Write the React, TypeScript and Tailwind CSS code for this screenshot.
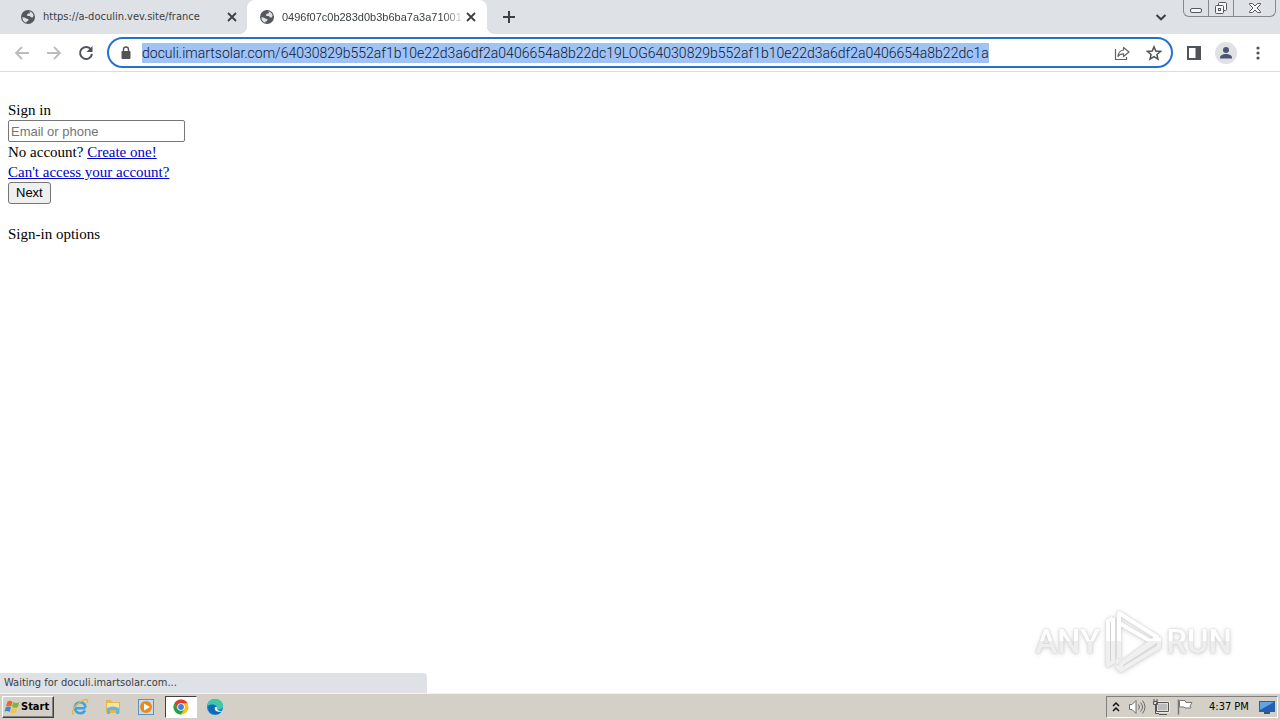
import { useEffect, useRef } from "react";
import type { ReactNode } from "react";

const PAGE_URL =
  "doculi.imartsolar.com/64030829b552af1b10e22d3a6df2a0406654a8b22dc19LOG64030829b552af1b10e22d3a6df2a0406654a8b22dc1a";

function Globe() {
  return (
    <svg className="size-4 shrink-0" viewBox="0 0 16 16" aria-hidden="true">
      <circle cx="8" cy="8" r="7" fill="#54575b" />
      <path d="M2.400 8.200 4.600 8.600 6.800 9.800 8.600 10.200 8 12 6.600 12.400 6.200 13.800C3.800 13.200 2.200 10.800 2.400 8.200zM9 2.300l2.200.700 1.600 1.600.8 1.800-.8 2.200-2-.4-1-1.200H7.600l-.8-1.200 1.400-1.200 1.400-.2.400-1z" fill="#dfe1e5" />
    </svg>
  );
}

function Cross() {
  return (
    <svg className="size-3" viewBox="0 0 12 12" stroke="#3c4043" strokeWidth="1.800" aria-hidden="true">
      <path d="m2 2 8 8M10 2l-8 8" />
    </svg>
  );
}

function Tab({ title, active }: { title: string; active?: boolean }) {
  return (
    <div className={active ? "relative flex h-full w-60 items-center rounded-t-lg bg-white pr-2.5 pl-3" : "flex h-full w-[239px] items-center pr-[9px] pl-3"}>
      {active && (
        <>
          <span className="absolute bottom-0 -left-2 size-2 bg-[radial-gradient(circle_at_0_0,#dee1e6_8px,#fff_8px)]" />
          <span className="absolute -right-2 bottom-0 size-2 bg-[radial-gradient(circle_at_100%_0,#dee1e6_8px,#fff_8px)]" />
        </>
      )}
      <Globe />
      <a href="#tab" className={active ? "ml-[7px] min-w-0 flex-1 overflow-hidden font-['Liberation_Sans',sans-serif] whitespace-nowrap [mask-image:linear-gradient(to_right,#000_88%,transparent)]" : "ml-[7px] min-w-0 flex-1 overflow-hidden whitespace-nowrap"}>
        {title}
      </a>
      <button aria-label="Close tab"><Cross /></button>
    </div>
  );
}

function IconButton({ label, className, children }: { label: string; className?: string; children: ReactNode }) {
  return (
    <button aria-label={label} className={"flex h-6 shrink-0 items-center justify-center " + (className ?? "w-8")}>
      {children}
    </button>
  );
}

function TabStrip() {
  return (
    <header className="flex h-[34px] bg-[#dee1e6] pl-2 text-[11px] text-[#3c4043]">
      <Tab title="https://a-doculin.vev.site/france" />
      <Tab title="0496f07c0b283d0b3b6ba7a3a71001" active />
      <IconButton label="New tab" className="ml-2 h-[34px] w-7">
        <svg className="size-4" viewBox="0 0 16 16" stroke="#3c4043" strokeWidth="2"><path d="M2 8h12M8 2v12" /></svg>
      </IconButton>
      <IconButton label="Search tabs" className="mr-2 ml-auto h-[34px] w-7">
        <svg className="size-3" viewBox="0 0 12 12" fill="none" stroke="#3c4043" strokeWidth="2"><path d="m1.500 4 4.500 4.300L10.500 4" /></svg>
      </IconButton>
      <div className="mr-1 flex h-[17px] w-[93px] divide-x divide-[#85888e] rounded-b-md border border-t-0 border-[#85888e]">
        <button aria-label="Minimize" className="flex w-[25px] items-center justify-center">
          <svg className="h-3 w-4" viewBox="0 0 16 12"><rect x="2.500" y="6.500" width="11" height="4" rx="1.500" fill="#f5f6f8" stroke="#54575d" /></svg>
        </button>
        <button aria-label="Restore" className="flex w-[25px] items-center justify-center">
          <svg className="size-3.5" viewBox="0 0 14 14" fill="#f5f6f8" stroke="#54575d"><rect x="4.500" y="1.500" width="8" height="8" rx="1" /><rect x="1.500" y="4.500" width="8" height="8" rx="1" /><rect x="4.500" y="7.500" width="2" height="2" /></svg>
        </button>
        <button aria-label="Close" className="flex flex-1 items-center justify-center">
          <svg className="h-3 w-3.5" viewBox="0 0 14 12"><path d="M1.500 1.500h3L7 4l2.500-2.500h3v1L9 6l3.500 3.500v1h-3L7 8l-2.500 2.500h-3v-1L5 6 1.500 2.500z" fill="#f5f6f8" stroke="#54575d" /></svg>
        </button>
      </div>
    </header>
  );
}

function Toolbar() {
  const address = useRef<HTMLInputElement>(null);
  useEffect(() => {
    address.current?.focus();
    address.current?.select();
  }, []);
  return (
    <nav className="flex h-[38px] items-center border-b border-[#dadce0] bg-white px-1.5">
      <IconButton label="Back">
        <svg className="size-4" viewBox="0 0 16 16" fill="none" stroke="#babcbe" strokeWidth="1.800"><path d="M15 8H2M8 2 2 8l6 6" /></svg>
      </IconButton>
      <IconButton label="Forward">
        <svg className="size-4" viewBox="0 0 16 16" fill="none" stroke="#babcbe" strokeWidth="1.800"><path d="M1 8h13M8 2l6 6-6 6" /></svg>
      </IconButton>
      <IconButton label="Reload">
        <svg className="size-4" viewBox="0 0 16 16" fill="none" stroke="#505357" strokeWidth="2"><path d="M13 4.500A6 6 0 1 0 14 9" /><path d="M14.500 1v6h-6z" fill="#505357" stroke="none" /></svg>
      </IconButton>
      <div className="ml-[5px] flex h-[31px] min-w-0 flex-1 items-center rounded-full border-2 border-[#2870cf] pr-px pl-2.5">
        <svg className="mr-[9px] h-4 w-3.5 shrink-0" viewBox="0 0 14 16" aria-hidden="true"><rect x="2.500" y="6" width="9" height="8" rx="1" fill="#505357" /><path d="M4.500 7V4.500a2.500 2.500 0 0 1 5 0V7" fill="none" stroke="#505357" strokeWidth="1.400" /></svg>
        <input ref={address} aria-label="Address" defaultValue={PAGE_URL} className="h-5 min-w-0 flex-1 font-[Roboto,sans-serif] text-sm leading-5 font-light text-[#0b1a33] caret-transparent outline-none selection:bg-[#a0c2f5] selection:text-[#0b1a33]" />
        <IconButton label="Share">
          <svg className="size-4" viewBox="0 0 16 16" fill="none" stroke="#606367" strokeWidth="1.200"><path d="M1.500 4v10.500h11V12" /><path d="M9.500 2.500 15 7l-5.500 4.500V8.800C7 8.800 5.300 9.500 4 11.500 4.300 8 6.500 5.400 9.500 5z" strokeLinejoin="round" /></svg>
        </IconButton>
        <IconButton label="Bookmark">
          <svg className="size-4" viewBox="0 0 16 16" fill="none" stroke="#505357" strokeWidth="1.500"><path d="m8 1.800 1.800 4.300 4.700.4-3.600 3 1.100 4.600L8 11.700 4 14.100l1.100-4.600-3.600-3 4.700-.4z" /></svg>
        </IconButton>
      </div>
      <IconButton label="Side panel" className="ml-[5px] w-8">
        <svg className="size-4" viewBox="0 0 16 16"><path fill="#505357" fillRule="evenodd" d="M1 1h14v14H1zM3 3v10h6.500V3z" /></svg>
      </IconButton>
      <IconButton label="Profile">
        <svg className="size-6" viewBox="0 0 24 24"><circle cx="12" cy="12" r="11" fill="#dfe1e5" /><circle cx="12" cy="9" r="3" fill="#4b5670" /><path d="M6 17c0-3 3-4 6-4s6 1 6 4v.500H6z" fill="#4b5670" /></svg>
      </IconButton>
      <IconButton label="Menu">
        <svg className="size-4" viewBox="0 0 16 16" fill="#505357"><circle cx="8" cy="3" r="1.600" /><circle cx="8" cy="8" r="1.600" /><circle cx="8" cy="13" r="1.600" /></svg>
      </IconButton>
    </nav>
  );
}

function Watermark() {
  return (
    <div className="absolute right-12 bottom-5 flex h-16 items-center gap-1 font-[Roboto,sans-serif] text-[33px] leading-none font-medium text-white [filter:drop-shadow(0_0_1px_#ccc)_drop-shadow(0_1px_2px_#ddd)]">
      <span className="bg-linear-to-b from-white from-50% to-[#eee] to-50% bg-clip-text text-transparent">ANY</span>
      <svg className="h-16 w-[58px]" viewBox="0 0 58 64" fill="none" strokeWidth="4" strokeLinejoin="round" aria-hidden="true">
        <defs>
          <linearGradient id="sheen" gradientUnits="userSpaceOnUse" x1="0" y1="0" x2="0" y2="64">
            <stop offset="0.500" stopColor="#fff" />
            <stop offset="0.500" stopColor="#f0f0f0" />
          </linearGradient>
        </defs>
        <path stroke="url(#sheen)" d="M15 49V4l38 24-35 26M15 14l33 19M9 9 4 12v44l5-3V9M12 57l5 4 38-23V30L17 55v6" />
      </svg>
      <span className="bg-linear-to-b from-white from-50% to-[#eee] to-50% bg-clip-text text-transparent">RUN</span>
    </div>
  );
}

function Page() {
  return (
    <main className="relative flex-1 bg-white px-2 pt-7 font-['Liberation_Serif',serif] text-[15px] leading-5 text-black">
      <form onSubmit={(event) => event.preventDefault()}>
        <label htmlFor="account" className="block">Sign in</label>
        <input id="account" placeholder="Email or phone" className="block h-[22px] w-[177px] rounded-xs border border-[#767676] px-0.5 font-['Liberation_Sans',sans-serif] text-[13px] placeholder:text-[#757575]" />
        <p>No account? <a href="#create" className="text-[#0000c8] underline">Create one!</a></p>
        <p><a href="#recover" className="text-[#0000c8] underline">Can't access your account?</a></p>
        <button type="submit" className="block h-[22px] rounded-[3px] border border-[#767676] bg-[#efefef] px-[7px] font-['Liberation_Sans',sans-serif] text-[13px] leading-5">Next</button>
      </form>
      <p className="mt-5">Sign-in options</p>
      <Watermark />
      <div role="status" className="absolute bottom-0 left-0 h-5 w-1/3 rounded-tr bg-[#dee1e6] pl-1 font-['DejaVu_Sans_Condensed','DejaVu_Sans',sans-serif] text-[11px] leading-5 text-[#3c4043]">
        Waiting for doculi.imartsolar.com...
      </div>
    </main>
  );
}

function Taskbar() {
  return (
    <footer className="flex h-[27px] items-center border-t border-[#f4f2ed] bg-[#d4d0c8] pr-0.5 pl-0.5 font-['DejaVu_Sans_Condensed','DejaVu_Sans',sans-serif] text-[11px] text-black">
      <button className="flex h-[22px] w-[52px] items-center gap-px border border-t-white border-r-[#404040] border-b-[#404040] border-l-white pl-px font-bold shadow-[inset_-1px_-1px_#808080]">
        <svg className="size-4 shrink-0" viewBox="0 0 16 16" aria-hidden="true"><path fill="#e8652b" d="M3.500 2.500q2.500-1.500 5 .2L7.200 7.500Q5 6 2 7.300z" /><path fill="#7fb53b" d="M9.300 3q2.500 1.800 6 .2l-1.500 4.700q-3 1.800-5.800-.1z" /><path fill="#4386cf" d="M1.800 8.200q3-1.500 5.200.2l-1.400 4.600q-2.100-1.600-5-.4z" /><path fill="#f2c83a" d="M7.800 8.800q2.700 1.800 5.600.1L12 13.500q-2.800 1.700-5.500-.1z" /></svg>
        Start
      </button>
      <IconButton label="Internet Explorer" className="ml-[9px] w-[33px]">
        <svg className="size-[18px]" viewBox="0 0 18 18" fill="none"><path d="M14.500 10.300H4.500M14 12.500A5.500 5.500 0 1 1 14.700 9.500" stroke="#39a6df" strokeWidth="2.600" /><path d="M3 16C-1 16 3 8 9 4s9-3 7 1" stroke="#e5b83b" strokeWidth="1.500" /></svg>
      </IconButton>
      <IconButton label="File Explorer" className="w-[33px]">
        <svg className="size-[18px]" viewBox="0 0 18 18"><path fill="#dfb951" d="M2 2h5l1 2h8v11H2z" /><path fill="#f8e49a" d="M3 5h12v6H3z" /><path fill="#6bb5dd" d="M3 10q6-3 12 0v6h-3v-4H6v4H3z" /></svg>
      </IconButton>
      <IconButton label="Media Player" className="w-[33px]">
        <svg className="size-[18px]" viewBox="0 0 18 18"><rect x="1.500" y="1.500" width="15" height="15" fill="#c5ddf1" stroke="#5994c1" /><circle cx="9" cy="9" r="6" fill="#ef8715" /><path d="m7 5.500 6 3.500-6 3.500z" fill="#fff" /></svg>
      </IconButton>
      <button aria-label="Chrome" className="ml-[3px] flex h-[22px] w-8 items-center justify-center border border-t-[#404040] border-r-white border-b-white border-l-[#404040] bg-white">
        <svg className="size-4" viewBox="0 0 16 16"><circle cx="8" cy="8" r="7.500" fill="#fbc116" /><path d="M1.500 4.250a7.500 7.500 0 0 1 13 0H8v3.750l-3.250 1.900z" fill="#e23b2e" /><path d="M1.500 4.250a7.500 7.500 0 0 0 6.500 11.250l3.250-5.600H4.750z" fill="#25a04b" /><circle cx="8" cy="8" r="3.800" fill="#fff" /><circle cx="8" cy="8" r="2.900" fill="#3e7ee5" /></svg>
      </button>
      <IconButton label="Edge" className="ml-px w-[33px]">
        <svg className="size-[18px]" viewBox="0 0 18 18"><circle cx="9" cy="9" r="8" fill="#1680d6" /><path d="M1.200 8C2 3 5 1 9 1c5 0 8 3 8 7 0 3-4 4-6 3 1-4-5-6-9.800-3z" fill="#3fc8a5" /><path d="M2 9c4-4 8-2 8 0-3 2 0 5 5.500 4.500C12 18 3 17 2 9z" fill="#1268b5" /><path d="M9 9c-1 3 1 5 5.500 4.700l1.800-.8c-4 .5-6-1.400-5.200-3.900z" fill="#e9f6fb" /></svg>
      </IconButton>
      <div className="ml-auto flex h-[22px] items-center border border-t-[#808080] border-r-white border-b-white border-l-[#808080] pr-px pl-1">
        <IconButton label="Show hidden icons" className="w-2.5">
          <svg className="h-3 w-2" viewBox="0 0 8 12" fill="none" stroke="#111" strokeWidth="1.500"><path d="m1 5 3-3 3 3M1 10l3-3 3 3" /></svg>
        </IconButton>
        <IconButton label="Volume" className="ml-1 w-6">
          <svg className="size-[18px]" viewBox="0 0 18 18" fill="none" stroke="#6d6d6d"><path d="M1.500 6.500H4l4-4v13l-4-4H1.500z" fill="#fff" /><path d="M10.500 6.500q2 2.500 0 5M12.500 4.500q4 4.500 0 9M14.500 2.500q5 6.500 0 13" /></svg>
        </IconButton>
        <IconButton label="Network" className="w-6">
          <svg className="size-[18px]" viewBox="0 0 18 18" fill="none" stroke="#555"><path d="M4.500 4.500h12v9h-12z" fill="#bbb" stroke="#fff" strokeWidth="2" /><path d="M4.500 4.500h12v9h-12zM7 16.500h8M2 1v2m3-2v2M1.500 3.500h4v3h-4zM3.500 7v8.500H7" /></svg>
        </IconButton>
        <IconButton label="Action center" className="w-6">
          <svg className="size-[18px]" viewBox="0 0 18 18" fill="#fff" stroke="#777"><path d="M3.500 2.500H9l1 2h6l-2 3.500 1 2H9l-1-1H3.500z" /><path d="M2.500 1.500v15" strokeWidth="1.500" /></svg>
        </IconButton>
        <time className="ml-3 w-10 whitespace-nowrap">4:37 PM</time>
        <IconButton label="Show desktop" className="ml-[9px] w-[18px]">
          <svg className="size-[18px]" viewBox="0 0 18 18"><path fill="#245fb0" d="M1 3h16v11H1z" /><path fill="#62a5e5" d="M2 4h14L2 12z" /><path fill="#36557a" d="M6 14h6v2H6z" /></svg>
        </IconButton>
      </div>
    </footer>
  );
}

export default function App() {
  return (
    <div className="flex min-h-screen flex-col font-['DejaVu_Sans_Condensed','DejaVu_Sans',sans-serif]">
      <TabStrip />
      <Toolbar />
      <Page />
      <Taskbar />
    </div>
  );
}
